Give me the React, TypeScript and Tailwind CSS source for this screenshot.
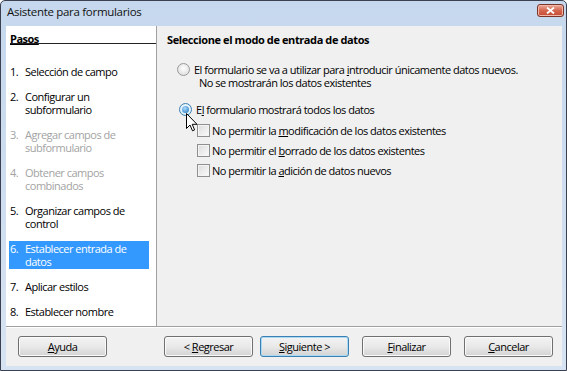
import type { ReactNode } from "react";

type Step = { n: number; lines: string[]; state?: "disabled" | "active" };

const steps: Step[] = [
  { n: 1, lines: ["Selección de campo"] },
  { n: 2, lines: ["Configurar un", "subformulario"] },
  { n: 3, lines: ["Agregar campos de", "subformulario"], state: "disabled" },
  { n: 4, lines: ["Obtener campos", "combinados"], state: "disabled" },
  { n: 5, lines: ["Organizar campos de", "control"] },
  { n: 6, lines: ["Establecer entrada de", "datos"], state: "active" },
  { n: 7, lines: ["Aplicar estilos"] },
  { n: 8, lines: ["Establecer nombre"] },
];

function Radio({ checked }: { checked?: boolean }) {
  return (
    <span
      className={
        checked
          ? "flex size-[13px] shrink-0 items-center justify-center rounded-full border border-[#3c7fb1] bg-[radial-gradient(circle_at_50%_40%,#ffffff,#c9e6f8)]"
          : "flex size-[13px] shrink-0 items-center justify-center rounded-full border border-[#9a9a9a] bg-[radial-gradient(circle_at_50%_40%,#ffffff,#d6d6d6)]"
      }
    >
      {checked ? (
        <span className="size-[7px] rounded-full bg-[radial-gradient(circle_at_40%_35%,#a8dcff,#1f6fb5)]" />
      ) : null}
    </span>
  );
}

function CheckRow({ children }: { children: ReactNode }) {
  return (
    <div className="ml-[30px] flex h-[13px] items-center">
      <span className="size-[13px] shrink-0 border border-[#8e8f8f] bg-linear-to-br from-[#dcdcdc] to-[#fbfbfb] shadow-[inset_0_0_0_1px_#f4f4f4]" />
      <span className="ml-[2px] leading-[13px] whitespace-nowrap">{children}</span>
    </div>
  );
}

function WinButton({ children, focused, className }: { children: ReactNode; focused?: boolean; className?: string }) {
  return (
    <div
      className={`flex h-[21px] w-[89px] shrink-0 items-center justify-center whitespace-pre rounded-[3px] border bg-linear-to-b from-[#f3f3f3] via-[#e9e9e9] to-[#d3d3d3] leading-[13px] ${
        focused ? "border-[#3c7fb1] shadow-[inset_0_0_0_1px_#a9daf5]" : "border-[#707070] shadow-[inset_0_0_0_1px_#fafafa]"
      } ${className ?? ""}`}
    >
      {children}
    </div>
  );
}

export default function App() {
  return (
    <div className="relative flex h-[371px] w-[567px] flex-col overflow-hidden rounded-t-[5px] border border-[#3b4050] bg-linear-to-b from-[#c6d8ed] to-[#d6e3f2] font-['Open_Sans',sans-serif] text-[11px] tracking-[-0.5px] text-black">
      {/* title bar */}
      <div className="flex h-[25px] shrink-0 items-start justify-between pl-[6px] pr-[2px]">
        <span className="pt-[4px] text-[11.5px] leading-[13px] tracking-[-0.3px] text-[#111]">Asistente para formularios</span>
        <div className="mt-[3px] flex h-[13px] w-[27px] items-center justify-center rounded-[3px] border border-[#7a3428] bg-linear-to-b from-[#e9ab9a] via-[#d5664f] to-[#c44b31] shadow-[inset_0_0_0_1px_#f0b8a8]">
          <svg width="9" height="7" viewBox="0 0 9 7">
            <path d="M1 0.5 L8 6.5 M8 0.5 L1 6.5" stroke="#ffffff" strokeWidth="1.8" />
          </svg>
        </div>
      </div>

      {/* client area */}
      <div className="mb-[4px] ml-[5px] mr-[4px] flex flex-1 flex-col bg-[#f0f0f0]">
        <div className="flex h-[300px] shrink-0">
          {/* steps pane */}
          <div className="w-[151px] shrink-0 border-r border-[#a0a0a0] bg-white">
            <div className="ml-[4px] mt-[6px] h-[12px] border-b border-[#222] font-bold leading-[13px]">
              <span className="underline">Pasos</span>
            </div>
            <div className="mt-[20px] flex flex-col gap-[10px]">
              {steps.map((s) => (
                <div
                  key={s.n}
                  className={`ml-[3px] mr-[7px] flex py-[1px] pl-[1px] leading-[13px] ${
                    s.state === "active" ? "bg-[#3399ff] text-white" : s.state === "disabled" ? "text-[#a3a3a3]" : ""
                  }`}
                >
                  <span className="w-[15px] shrink-0">{s.n}.</span>
                  <div className="flex flex-col">
                    {s.lines.map((l) => (
                      <span key={l} className="h-[13px]">
                        {l}
                      </span>
                    ))}
                  </div>
                </div>
              ))}
            </div>
          </div>

          {/* options pane */}
          <div className="flex flex-1 flex-col pl-[10px]">
            <div className="mt-[7px] font-bold leading-[13px] tracking-[-0.4px]">Seleccione el modo de entrada de datos</div>

            <div className="ml-[10px] mt-[17px] flex items-start">
              <Radio />
              <div className="ml-[4px] flex flex-col leading-[13px]">
                <span>
                  El formulario se va a utilizar para <span className="underline">i</span>ntroducir únicamente datos nuevos.
                </span>
                <span className="pl-[5px]">No se mostrarán los datos existentes</span>
              </div>
            </div>

            <div className="ml-[12px] mt-[14px] flex items-center">
              <Radio checked />
              <span className="ml-[4px] leading-[13px]">
                E<span className="underline">l</span> formulario mostrará todos los datos
              </span>
            </div>

            <div className="mt-[8px] flex flex-col gap-[7px]">
              <CheckRow>
                No permitir la <span className="underline">m</span>odificación de los datos existentes
              </CheckRow>
              <CheckRow>
                No permitir el <span className="underline">b</span>orrado de los datos existentes
              </CheckRow>
              <CheckRow>
                No permitir la <span className="underline">a</span>dición de datos nuevos
              </CheckRow>
            </div>
          </div>
        </div>

        {/* button bar */}
        <div className="flex flex-1 items-start border-t border-[#a0a0a0] pt-[9px] shadow-[inset_0_1px_0_#ffffff]">
          <WinButton className="ml-[12px]">
            <span className="underline">A</span>yuda
          </WinButton>
          <WinButton className="ml-[57px]">
            {"< "}
            <span className="underline">R</span>egresar
          </WinButton>
          <WinButton focused className="ml-[7px]">
            <span className="underline">S</span>iguiente{" >"}
          </WinButton>
          <WinButton className="ml-[13px]">
            <span className="underline">F</span>inalizar
          </WinButton>
          <WinButton className="ml-[13px]">
            <span className="underline">C</span>ancelar
          </WinButton>
        </div>
      </div>

      {/* mouse pointer */}
      <svg className="absolute left-[185px] top-[112px]" width="12" height="19" viewBox="0 0 12 19">
        <path d="M0.5 0.5 L0.5 15.5 L4 12 L6.5 17.8 L8.6 16.9 L6.2 11.3 L11 11.3 Z" fill="#ffffff" stroke="#000000" strokeWidth="1" strokeLinejoin="miter" />
      </svg>
    </div>
  );
}
